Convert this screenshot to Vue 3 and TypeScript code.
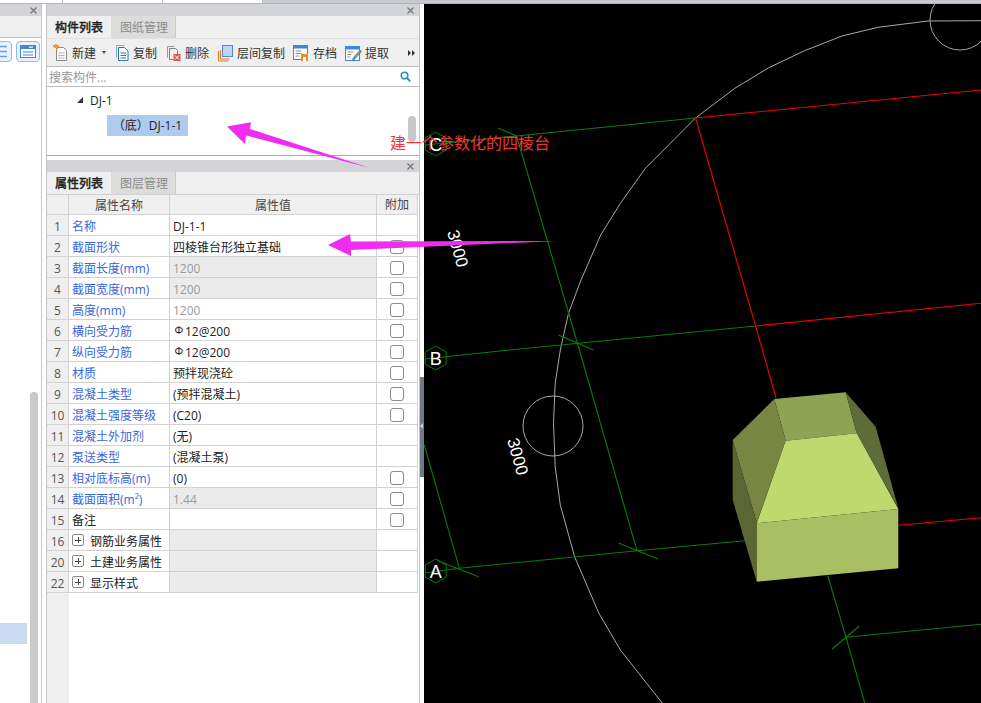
<script setup lang="ts">
interface Row {
  n: number
  name: string
  value?: string
  rebar?: boolean
  check?: boolean
  link?: boolean
  muted?: boolean
  shaded?: boolean
  group?: boolean
}

const rows: Row[] = [
  { n: 1, name: '名称', value: 'DJ-1-1', link: true },
  { n: 2, name: '截面形状', value: '四棱锥台形独立基础', link: true, check: true },
  { n: 3, name: '截面长度(mm)', value: '1200', link: true, check: true, muted: true, shaded: true },
  { n: 4, name: '截面宽度(mm)', value: '1200', link: true, check: true, muted: true, shaded: true },
  { n: 5, name: '高度(mm)', value: '1200', link: true, check: true, muted: true },
  { n: 6, name: '横向受力筋', value: '12@200', rebar: true, link: true, check: true },
  { n: 7, name: '纵向受力筋', value: '12@200', rebar: true, link: true, check: true },
  { n: 8, name: '材质', value: '预拌现浇砼', link: true, check: true },
  { n: 9, name: '混凝土类型', value: '(预拌混凝土)', link: true, check: true },
  { n: 10, name: '混凝土强度等级', value: '(C20)', link: true, check: true },
  { n: 11, name: '混凝土外加剂', value: '(无)', link: true },
  { n: 12, name: '泵送类型', value: '(混凝土泵)', link: true },
  { n: 13, name: '相对底标高(m)', value: '(0)', link: true, check: true },
  { n: 14, name: '截面面积(m²)', value: '1.44', link: true, check: true, muted: true, shaded: true },
  { n: 15, name: '备注', value: '', check: true },
  { n: 16, name: '钢筋业务属性', group: true, shaded: true },
  { n: 20, name: '土建业务属性', group: true, shaded: true },
  { n: 22, name: '显示样式', group: true, shaded: true },
]

const arc =
  '981,20.7 928,21 878,27.3 842,36 804.6,50.7 768.8,67.7 734.8,88.3 695.5,118 645.4,168.3 620.4,203.3 600.7,235 581,280 568.5,313.3 560.3,350 555.2,383.3 553.5,423.3 555.2,466.7 560.3,505 574.6,556.7 598.9,613.3 620.4,650 662.2,703'

const greenLines = [
  '425,145 516.6,136 695.5,118',
  '498,128 516.6,136',
  '516.6,136 577.4,343 637,550.7',
  '558.5,335 593.5,350',
  '425,359 509.4,350 755.6,326',
  '618.6,543 658,559',
  '425,573 459.4,568.3 637.2,550.7 744.9,540.7',
  '437.9,560.7 478.7,576.7',
  '424.3,445 459.4,568.3',
  '827.9,576 845.8,636.7 864.7,703',
  '832.2,649 859.4,626',
  '845.8,637.3 981,624.3',
]
const redLines = [
  '695.5,118 981,90',
  '695.5,118 755.6,326 776,398',
  '755.6,326 981,303.3',
  '898.7,525.3 981,517.7',
]
const axes = [
  { label: 'C', y: 144 },
  { label: 'B', y: 358 },
  { label: 'A', y: 571 },
]
const hexagon = (cy: number): string => {
  const cx = 435.7
  return [
    [cx, cy - 12],
    [cx + 10.5, cy - 6],
    [cx + 10.5, cy + 6],
    [cx, cy + 12],
    [cx - 10.5, cy + 6],
    [cx - 10.5, cy - 6],
  ]
    .map((p) => p.join(','))
    .join(' ')
}
</script>

<template>
  <div class="app">
    <div class="top-strip">
      <div class="strip-cell"></div>
      <div class="strip-cell"></div>
      <div class="strip-cell"></div>
      <div class="strip-rest"></div>
    </div>

    <div class="workspace">
      <aside class="side">
        <div class="panel-head">
          <svg class="close" viewBox="0 0 7 7"><path d="M.5.5l6 6M6.5.5l-6 6" /></svg>
        </div>
        <div class="side-bar"></div>
        <div class="side-tools">
          <div class="cut-icon">
            <span class="tool-btn">
              <svg viewBox="0 0 24 21" width="24" height="21"><path d="M5 5.5h14M5 10.5h14M5 15.5h14" stroke="#5ea0e6" stroke-width="1.4" /></svg>
            </span>
          </div>
          <span class="tool-btn">
            <svg viewBox="0 0 24 21" width="24" height="21">
              <rect x="4.5" y="4.5" width="15" height="12" fill="#fff" stroke="#3f87d6" />
              <rect x="4" y="4" width="16" height="4" fill="#3f87d6" />
              <rect x="13" y="5.5" width="4" height="1.2" fill="#fff" />
              <path d="M7 11h10M7 14h10" stroke="#3f87d6" />
            </svg>
          </span>
        </div>
        <div class="side-body">
          <div class="side-list"><div class="side-selected"></div></div>
          <div class="side-scroll"></div>
        </div>
      </aside>

      <main class="middle">
        <section class="top-panel">
          <div class="panel-head">
            <svg class="close" viewBox="0 0 7 7"><path d="M.5.5l6 6M6.5.5l-6 6" /></svg>
          </div>
          <div class="tabs">
            <span class="tab active">构件列表</span>
            <span class="tab">图纸管理</span>
          </div>
          <div class="toolbar">
            <span class="tool t-new">
              <svg viewBox="0 0 15 18" width="15" height="18">
                <path d="M3.5 3.5h7l3 3v10h-10z" fill="#fbfbfb" stroke="#8a8a8a" />
                <path d="M5.5 9h6M5.5 11.5h6M5.5 14h6" stroke="#b5b5b5" />
                <path d="M0 1h2v-1h2v1h2v2h-1v2h-2v-1h-2v-1h-1z" fill="#f39a2b" />
              </svg>
              <b>新建</b>
              <i class="caret"></i>
            </span>
            <span class="tool t-copy">
              <svg viewBox="0 0 15 18" width="15" height="18">
                <path d="M1.5 1.5h8M1.5 1.5v12" stroke="#7fa9d6" fill="none" />
                <path d="M3.5 3.5h6l3.5 3.5v9.500h-9.500z" fill="#fff" stroke="#2e75b6" />
                <path d="M5.500 9h5.500M5.500 11.500h5.500M5.500 14h5.500" stroke="#2e75b6" />
              </svg>
              <b>复制</b>
            </span>
            <span class="tool t-del">
              <svg viewBox="0 0 15 18" width="15" height="18">
                <path d="M1.500 2.500h7M1.500 2.500v11" stroke="#9a9a9a" fill="none" />
                <path d="M3.500 4.500h6l2 2v4M3.500 4.500v11h4" stroke="#808080" fill="none" />
                <rect x="7.500" y="10" width="7" height="7" fill="#d9534f" />
                <path d="M9 11.500l4 4M13 11.500l-4 4" stroke="#fff" />
              </svg>
              <b>删除</b>
            </span>
            <span class="tool t-floor">
              <svg viewBox="0 0 15 18" width="15" height="18">
                <path d="M.5 7v10h10M2.500 6v9h9" stroke="#e8792a" fill="none" />
                <rect x="4.500" y="1.500" width="10" height="11" fill="#bcd5f3" stroke="#4a8ad4" />
              </svg>
              <b>层间复制</b>
            </span>
            <span class="tool t-save">
              <svg viewBox="0 0 15 18" width="15" height="18">
                <rect x=".5" y="1.500" width="14" height="14" fill="#fff" stroke="#3f87d6" />
                <rect x="0" y="1" width="15" height="3.500" fill="#3f87d6" />
                <path d="M2.500 7h6M2.500 9.500h6M2.500 12h4" stroke="#8a8a8a" />
                <rect x="8" y="10" width="7" height="7" fill="#ee8a2c" />
                <rect x="10" y="13" width="3" height="4" fill="#fff" />
              </svg>
              <b>存档</b>
            </span>
            <span class="tool t-pick">
              <svg viewBox="0 0 17 18" width="17" height="18">
                <rect x=".5" y="2.500" width="14" height="14" fill="#fff" stroke="#3f87d6" />
                <rect x="0" y="2" width="15" height="3.500" fill="#3f87d6" />
                <path d="M2.500 8h6M2.500 10.500h4M2.500 13h3" stroke="#8a8a8a" />
                <path d="M8 14l7-8 1.500 1.500-7 8-2 .5z" fill="#5aa9a0" stroke="#555" stroke-width=".5" />
              </svg>
              <b>提取</b>
            </span>
            <svg class="more" viewBox="0 0 7 6" width="7" height="6"><path d="M0 0l3 3-3 3zM4 0l3 3-3 3z" fill="#333" /></svg>
          </div>
          <div class="search">
            <span>搜索构件...</span>
            <svg viewBox="0 0 11 11" width="11" height="11">
              <circle cx="4.500" cy="4.500" r="3.300" fill="none" stroke="#2f8ccb" stroke-width="1.600" />
              <path d="M7 7l3.200 3.200" stroke="#2f8ccb" stroke-width="2" />
            </svg>
          </div>
          <div class="tree">
            <div class="tree-node">
              <i class="tree-arrow"></i>
              <span>DJ-1</span>
            </div>
            <div class="tree-leaf">（底）DJ-1-1</div>
            <div class="tree-scroll"></div>
          </div>
        </section>

        <section class="bottom-panel">
          <div class="panel-head">
            <svg class="close" viewBox="0 0 7 7"><path d="M.5.5l6 6M6.5.5l-6 6" /></svg>
          </div>
          <div class="tabs tabs-b">
            <span class="tab active">属性列表</span>
            <span class="tab">图层管理</span>
          </div>
          <div class="table">
            <div class="row head">
              <div class="c-n"></div>
              <div class="c-name">属性名称</div>
              <div class="c-val">属性值</div>
              <div class="c-add">附加</div>
            </div>
            <div v-for="r in rows" :key="r.n" class="row">
              <div class="c-n">{{ r.n }}</div>
              <div class="c-name" :class="{ link: r.link }">
                <i v-if="r.group" class="plus"></i>
                <span :class="{ 'group-label': r.group }">{{ r.name }}</span>
              </div>
              <div class="c-val" :class="{ muted: r.muted, shaded: r.shaded }">
                <span v-if="r.rebar" class="rebar">Φ</span>{{ r.value }}
              </div>
              <div class="c-add"><i v-if="r.check" class="check"></i></div>
            </div>
            <div class="filler"><div class="filler-gutter"></div></div>
          </div>
        </section>
      </main>

      <div class="splitter"><div class="handle"></div></div>

      <div class="canvas">
        <svg viewBox="424 4 557 699" width="557" height="699">
          <rect x="424" y="4" width="557" height="699" fill="#000" />
          <polyline :points="arc" fill="none" stroke="#a8a8a8" />
          <circle cx="553" cy="426" r="30" fill="none" stroke="#a8a8a8" />
          <circle cx="960" cy="20" r="30" fill="none" stroke="#a8a8a8" />
          <polyline v-for="l in greenLines" :key="l" :points="l" fill="none" stroke="#0a7d0a" stroke-width="1.100" />
          <polyline v-for="l in redLines" :key="l" :points="l" fill="none" stroke="#f00000" stroke-width="1.100" />
          <g v-for="a in axes" :key="a.label">
            <polygon :points="hexagon(a.y)" fill="none" stroke="#0a7d0a" />
            <text x="435.700" :y="a.y + 6.500" class="axis-label" text-anchor="middle">{{ a.label }}</text>
          </g>
          <text class="dim" transform="translate(447 232) rotate(74)">3000</text>
          <text class="dim" transform="translate(507 440) rotate(74)">3000</text>
          <polygon points="774.300,399 845.700,392.300 856.700,433.300 785.700,440.700" fill="#8fa355" />
          <polygon points="774.300,399 785.700,440.700 756.700,522.700 732.700,440" fill="#788543" />
          <polygon points="732.700,440 756.700,522.700 756.700,581.700 732.700,500" fill="#5c6635" />
          <polygon points="845.700,392.300 875.700,426.700 898.300,508.300 856.700,433.300" fill="#5f6b38" />
          <polygon points="785.700,440.700 856.700,433.300 898.300,509 756.700,523.300" fill="#bfd96f" />
          <polygon points="756.700,523.300 898.300,509 898.300,568.300 756.700,581.700" fill="#a9bf62" />
        </svg>
      </div>
    </div>

    <svg class="arrows" viewBox="0 0 981 703" width="981" height="703">
      <polygon points="227,126.500 251,122.300 250,129 370,168 246,135.500 245,144" fill="#f02cf0" />
      <polygon points="328,245 350,234 351,241.500 557,241 351,250 351,256" fill="#f02cf0" />
    </svg>
    <div class="note">建一个参数化的四棱台</div>
  </div>
</template>

<style scoped>
.app {
  position: relative;
  width: 981px;
  height: 703px;
  overflow: hidden;
  display: flex;
  flex-direction: column;
  background: #fff;
  font-family: "Open Sans", "Noto Sans CJK SC", sans-serif;
  font-size: 12px;
  color: #222;
}
.top-strip {
  height: 4px;
  flex: none;
  display: flex;
  box-sizing: border-box;
  border-bottom: 1px solid #b4b4b8;
}
.strip-cell {
  width: 99px;
  border-right: 1px solid #b8b8b8;
}
.strip-cell:first-child {
  width: 62px;
}
.strip-rest {
  flex: 1;
  background: #c8c8d0;
}
.workspace {
  flex: 1;
  min-height: 0;
  display: flex;
}
.side {
  width: 42px;
  flex: none;
  box-sizing: border-box;
  border-right: 1px solid #c8c8c8;
  display: flex;
  flex-direction: column;
  margin-right: 4px;
}
.panel-head {
  height: 12px;
  flex: none;
  background: #d3d4d8;
  display: flex;
  align-items: center;
  justify-content: flex-end;
  padding-right: 5px;
}
.side .panel-head {
  padding-right: 4px;
}
.close {
  width: 7px;
  height: 7px;
  fill: none;
  stroke: #777;
  stroke-width: 1.300;
}
.side-bar {
  height: 22px;
  flex: none;
  box-sizing: border-box;
  background: #efefef;
  border-bottom: 1px solid #c4c4c4;
}
.side-tools {
  height: 25px;
  flex: none;
  box-sizing: border-box;
  display: flex;
  gap: 4px;
  padding-top: 3px;
}
.cut-icon {
  width: 12px;
  overflow: hidden;
  display: flex;
  justify-content: flex-end;
  flex: none;
}
.tool-btn {
  display: block;
  flex: none;
  width: 24px;
  height: 21px;
  box-sizing: border-box;
  border: 1px solid #8fbcec;
  border-radius: 4px;
  background: #e9f2fc;
  overflow: hidden;
}
.tool-btn svg {
  display: block;
  margin: -1px;
}
.side-body {
  flex: 1;
  display: flex;
}
.side-list {
  width: 27px;
  flex: none;
}
.side-selected {
  margin-top: 560px;
  height: 21px;
  background: #c9daf1;
}
.side-scroll {
  width: 8px;
  margin-left: 3px;
  margin-top: 329px;
  background: #c9c9c9;
  border-radius: 4px 4px 0 0;
}
.middle {
  width: 374px;
  flex: none;
  box-sizing: border-box;
  border-left: 1px solid #c4c4c4;
  border-right: 1px solid #c4c4c4;
  display: flex;
  flex-direction: column;
}
.top-panel {
  height: 152px;
  flex: none;
  box-sizing: border-box;
  border-bottom: 1px solid #aaa;
  display: flex;
  flex-direction: column;
}
.bottom-panel {
  flex: 1;
  min-height: 0;
  margin-top: 4px;
  display: flex;
  flex-direction: column;
}
.tabs {
  height: 22px;
  flex: none;
  display: flex;
  background: #efefef;
}
.tab {
  width: 65px;
  box-sizing: border-box;
  padding-left: 2px;
  line-height: 24px;
  text-align: center;
  color: #8c8c8c;
  background: #dcdcdc;
  border-right: 1px solid #c8c8c8;
}
.tab.active {
  width: 64px;
  padding-left: 0;
  background: #efefef;
  color: #222;
  font-weight: 500;
  border-right: 0;
  -webkit-text-stroke: 0.3px #222;
}
.toolbar {
  height: 29px;
  flex: none;
  box-sizing: border-box;
  background: #efefef;
  border-top: 1px solid #e0e0e0;
  border-bottom: 1px solid #bdbdbd;
  display: flex;
  align-items: center;
  padding-left: 6px;
}
.tool {
  display: flex;
  align-items: center;
  gap: 4px;
  flex: none;
}
.tool b {
  font-weight: 400;
  color: #333;
}
.t-copy {
  margin-left: 9px;
  gap: 3px;
}
.t-del {
  margin-left: 9px;
}
.t-floor {
  margin-left: 9px;
}
.t-save {
  margin-left: 8px;
  gap: 5px;
}
.t-pick {
  margin-left: 8px;
  gap: 3px;
}
.caret {
  width: 0;
  height: 0;
  margin-left: 2px;
  border-left: 2.500px solid transparent;
  border-right: 2.500px solid transparent;
  border-top: 3px solid #444;
}
.more {
  margin-left: auto;
  margin-right: 4px;
}
.search {
  height: 20px;
  flex: none;
  box-sizing: border-box;
  border-bottom: 1px solid #bdbdbd;
  background: #fff;
  display: flex;
  align-items: center;
  justify-content: space-between;
  padding: 0 8px 0 2px;
  color: #999;
}
.tree {
  position: relative;
  flex: 1;
  background: #fff;
  padding-top: 3px;
}
.tree-node {
  height: 20px;
  display: flex;
  align-items: center;
  padding-left: 30px;
  gap: 7px;
}
.tree-arrow {
  width: 0;
  height: 0;
  border-left: 6px solid transparent;
  border-bottom: 6px solid #333;
}
.tree-leaf {
  width: 81px;
  height: 21px;
  margin: 5px 0 0 60px;
  background: #aecbee;
  line-height: 21px;
  text-align: center;
  white-space: nowrap;
}
.tree-scroll {
  position: absolute;
  left: 361px;
  top: 29px;
  width: 8px;
  height: 26px;
  border-radius: 4px;
  background: #c8c8c8;
}
.table {
  flex: 1;
  min-height: 0;
  display: flex;
  flex-direction: column;
  border-top: 1px solid #d0d0d0;
}
.row {
  height: 21px;
  flex: none;
  box-sizing: border-box;
  display: flex;
  border-bottom: 1px solid #d2d2d2;
  line-height: 24px;
  width: 371px;
}
.head {
  height: 20px;
  line-height: 21px;
  background: #efefef;
  color: #444;
}
.head .c-name,
.head .c-val,
.head .c-add {
  padding: 0;
  justify-content: center;
  text-align: center;
  background: #efefef;
}
.c-n {
  width: 22px;
  flex: none;
  box-sizing: border-box;
  background: #efefef;
  border-right: 1px solid #d2d2d2;
  text-align: center;
  color: #555;
}
.c-name {
  width: 101px;
  flex: none;
  box-sizing: border-box;
  padding-left: 3px;
  border-right: 1px solid #d2d2d2;
  display: flex;
  align-items: flex-start;
  white-space: nowrap;
}
.link {
  color: #3a66dd;
}
.group-label {
  margin-left: 6px;
}
.plus {
  width: 12px;
  height: 12px;
  flex: none;
  margin-top: 4px;
  box-sizing: border-box;
  border: 1px solid #888;
  border-radius: 2px;
  background: linear-gradient(#444, #444) center / 6px 1px no-repeat,
    linear-gradient(#444, #444) center / 1px 6px no-repeat;
}
.c-val {
  width: 207px;
  flex: none;
  box-sizing: border-box;
  padding-left: 3px;
  border-right: 1px solid #d2d2d2;
  white-space: nowrap;
}
.muted {
  color: #9a9a9a;
}
.shaded {
  background: #ebebeb;
}
.rebar {
  display: inline-block;
  width: 12px;
  font-size: 11px;
  line-height: 10px;
  vertical-align: 2px;
  text-align: center;
  color: #222;
}
.c-add {
  width: 41px;
  flex: none;
  box-sizing: border-box;
  padding-top: 1px;
  border-right: 1px solid #d2d2d2;
  display: flex;
  align-items: center;
  justify-content: center;
}
.check {
  width: 14px;
  height: 14px;
  box-sizing: border-box;
  border: 1px solid #8a8a8a;
  border-radius: 3px;
  background: #fff;
}
.filler {
  flex: 1;
  display: flex;
}
.filler-gutter {
  width: 22px;
  background: #efefef;
}
.splitter {
  width: 4px;
  flex: none;
  background: #fff;
}
.handle {
  position: relative;
  margin-top: 373px;
  height: 100px;
  background: #6f7a85;
}
.handle::after {
  content: "";
  position: absolute;
  left: 0;
  top: 46px;
  border-right: 3px solid #c9ced3;
  border-top: 3px solid transparent;
  border-bottom: 3px solid transparent;
}
.canvas {
  flex: 1;
  min-width: 0;
  background: #000;
}
.canvas svg {
  display: block;
}
.axis-label {
  fill: #fff;
  font-family: "Liberation Sans", sans-serif;
  font-size: 18px;
}
.dim {
  fill: #fff;
  font-family: "Liberation Sans", sans-serif;
  font-size: 17px;
}
.arrows {
  position: absolute;
  left: 0;
  top: 0;
  pointer-events: none;
}
.note {
  position: absolute;
  left: 390px;
  top: 130px;
  font-family: "Noto Sans CJK SC", sans-serif;
  font-size: 16px;
  line-height: 24px;
  color: #f03434;
  white-space: nowrap;
}
</style>
